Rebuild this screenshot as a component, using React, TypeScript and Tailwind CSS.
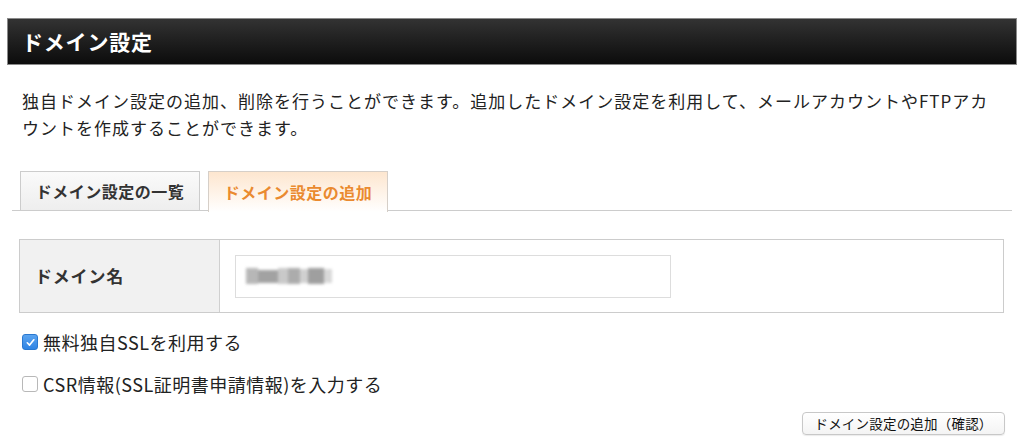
import React from "react";

const font = { fontFamily: '"Noto Sans CJK JP", "Noto Sans", sans-serif' };

export default function App() {
  return (
    <div className="w-[1024px] h-[448px] bg-white overflow-hidden text-[#222]" style={font}>
      <div className="pt-[18px] px-[7px]">
        <div className="h-[47px] w-[1010px] border border-[#8a8a8a] bg-gradient-to-b from-[#333333] to-[#0c0c0c] flex items-center pl-[14px]">
          <span className="text-[21px] font-bold text-white tracking-[0.8px]">ドメイン設定</span>
        </div>
      </div>

      <div className="mt-[22px] pl-[22px] text-[17px] leading-[27px] tracking-[1px] whitespace-nowrap">
        独自ドメイン設定の追加、削除を行うことができます。追加したドメイン設定を利用して、メールアカウントやFTPアカ
        <br />
        ウントを作成することができます。
      </div>

      <div className="mt-[30px] ml-[12px] w-[1000px] border-b border-[#cccccc] pl-[8px] flex gap-[8px] h-[40px]">
        <div className="w-[180px] h-[40px] border border-[#cccccc] bg-gradient-to-b from-[#fafafa] to-[#eeeeee] flex items-center justify-center text-[16px] font-bold text-[#333] tracking-[0.5px]">
          ドメイン設定の一覧
        </div>
        <div className="w-[180px] h-[41px] border border-b-0 border-[#d6cfc8] bg-gradient-to-b from-[#fde6cf] to-[#ffffff] flex items-center justify-center text-[16px] font-bold text-[#ea8a2f] tracking-[0.5px] pb-[1px]">
          ドメイン設定の追加
        </div>
      </div>

      <div className="mt-[28px] ml-[19px] w-[985px] h-[74px] border border-[#cccccc] flex">
        <div className="w-[200px] bg-[#f1f1f1] border-r border-[#d0d0d0] flex items-center pl-[15px] text-[17px] font-bold text-[#333] tracking-[0.8px]">
          ドメイン名
        </div>
        <div className="flex-1 flex items-center pl-[15px]">
          <div className="w-[436px] h-[43px] border border-[#dddddd] bg-white flex items-center pl-[10px]">
            <div className="flex items-center blur-[1.5px] opacity-90">
              <div className="w-[12px] h-[16px] bg-[#b0b0b0]" />
              <div className="w-[20px] h-[13px] bg-[#999999]" />
              <div className="w-[10px] h-[16px] bg-[#c4c4c4]" />
              <div className="w-[12px] h-[16px] bg-[#a4a4a4]" />
              <div className="w-[8px] h-[14px] bg-[#cccccc]" />
              <div className="w-[16px] h-[16px] bg-[#959595]" />
              <div className="w-[8px] h-[14px] bg-[#d4d4d4]" />
            </div>
          </div>
        </div>
      </div>

      <div className="mt-[17px] pl-[22px] flex items-center h-[24px] text-[18px] tracking-[0.5px]">
        <div className="w-[16px] h-[16px] rounded-[3px] bg-gradient-to-b from-[#5aa4f0] to-[#2f84e4] border border-[#2a78d0] flex items-center justify-center">
          <svg width="11" height="11" viewBox="0 0 12 12" fill="none">
            <path d="M2.5 6.3 L5 8.8 L9.6 3" stroke="white" strokeWidth="1.8" strokeLinecap="round" strokeLinejoin="round" />
          </svg>
        </div>
        <span className="ml-[5px]">無料独自SSLを利用する</span>
      </div>

      <div className="mt-[18px] pl-[22px] flex items-center h-[24px] text-[18px] tracking-[0.5px]">
        <div className="w-[16px] h-[16px] rounded-[3px] bg-white border border-[#b8b8b8]" />
        <span className="ml-[5px]">CSR情報(SSL証明書申請情報)を入力する</span>
      </div>

      <div className="mt-[16px] flex justify-end pr-[19px]">
        <button className="h-[23px] w-[203px] rounded-[4px] border border-[#c8c8c8] bg-gradient-to-b from-white to-[#f4f4f4] shadow-[0_1px_1px_rgba(0,0,0,0.08)] text-[13.5px] text-[#111] tracking-[0.2px] flex items-center justify-center">
          ドメイン設定の追加（確認）
        </button>
      </div>
    </div>
  );
}
